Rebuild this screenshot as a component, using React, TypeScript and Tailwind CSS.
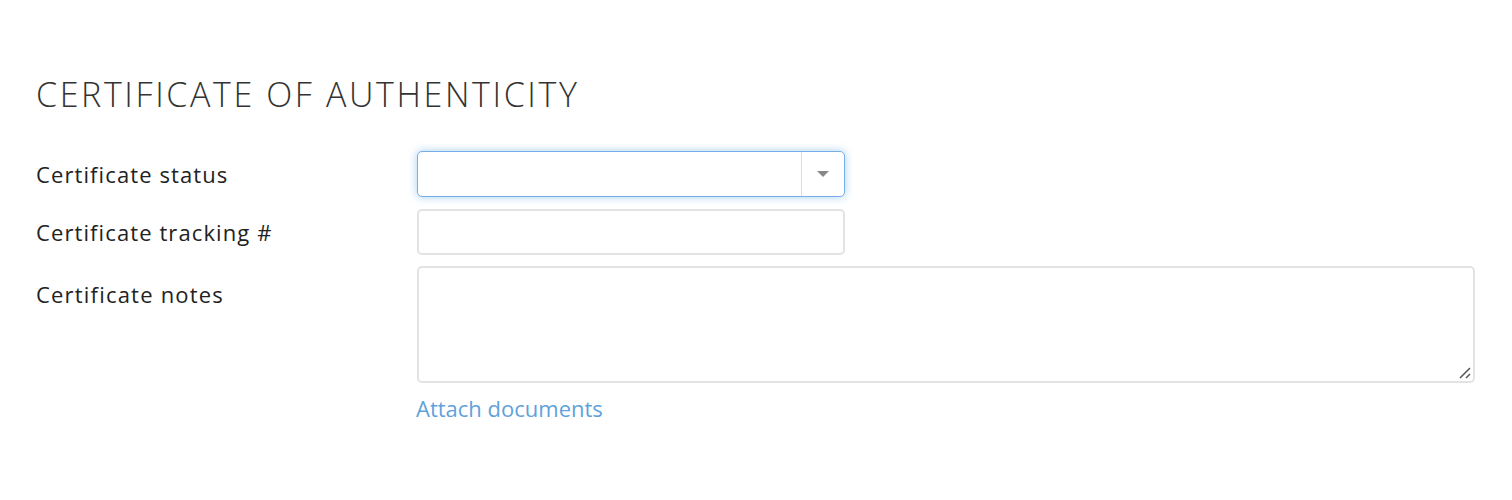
export default function App() {
  return (
    <div className="h-[500px] w-[1512px] bg-white pl-[36px] pt-[73px] text-[#222]" style={{ fontFamily: "'Open Sans', Lato, sans-serif" }}>
      <h2 className="text-[34px] font-light leading-[42px] tracking-[2.6px] text-[#333]">CERTIFICATE OF AUTHENTICITY</h2>
      <div className="mt-[36px] flex flex-col">
        <div className="flex items-center">
          <label className="w-[381px] text-[22px] leading-[28px] tracking-[1.1px]">Certificate status</label>
          <div className="flex h-[46px] w-[428px] items-stretch rounded-[5px] border border-[#7aaee8] bg-white shadow-[0_0_8px_rgba(102,175,233,0.6)]">
            <div className="flex-1" />
            <div className="flex w-[43px] items-center justify-center border-l border-[#ddd]">
              <svg width="12" height="7" viewBox="0 0 12 7"><path d="M0 0h12L6 6z" fill="#888" /></svg>
            </div>
          </div>
        </div>
        <div className="mt-[12px] flex items-center">
          <label className="w-[381px] text-[22px] leading-[28px] tracking-[1.1px]">Certificate tracking #</label>
          <div className="h-[46px] w-[428px] rounded-[5px] border-2 border-[#e3e3e3] bg-white" />
        </div>
        <div className="mt-[11px] flex items-start">
          <label className="w-[381px] pt-[14px] text-[22px] leading-[28px] tracking-[1.2px]">Certificate notes</label>
          <div className="relative h-[117px] w-[1058px] rounded-[5px] border-2 border-[#e3e3e3] bg-white">
            <svg className="absolute bottom-[2px] right-[2px]" width="14" height="14" viewBox="0 0 14 14">
              <path d="M13 3L3 13M13 9L9 13" stroke="#555" strokeWidth="1.5" />
            </svg>
          </div>
        </div>
        <div className="ml-[380px] mt-[11px]">
          <a className="text-[22px] leading-[28px] text-[#5fa2db]">Attach documents</a>
        </div>
      </div>
    </div>
  );
}
